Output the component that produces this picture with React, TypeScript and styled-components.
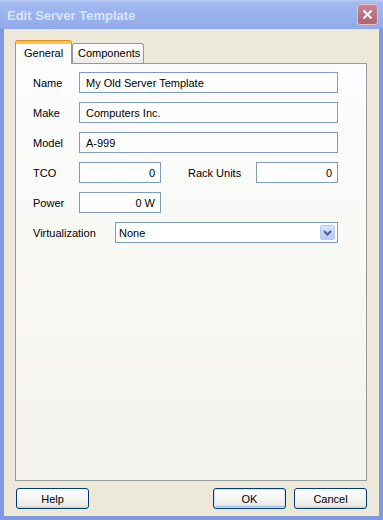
import React from 'react';
import styled, { createGlobalStyle } from 'styled-components';

const GlobalStyle = createGlobalStyle`
  html, body {
    margin: 0;
    padding: 0;
    background: #ece9d8;
  }
  body {
    font-family: "Liberation Sans", Arial, sans-serif;
    font-size: 11px;
    color: #000;
  }
`;

const Window = styled.div`
  width: 383px;
  height: 520px;
  box-sizing: border-box;
  display: flex;
  flex-direction: column;
  background: #8199e3;
`;

const TitleBar = styled.div`
  height: 29px;
  flex: 0 0 auto;
  display: flex;
  align-items: center;
  justify-content: space-between;
  padding: 0 5px 0 7px;
  box-sizing: border-box;
  background: linear-gradient(
    to bottom,
    #b9cbf4 0px,
    #a3baf0 3px,
    #9bb3ee 12px,
    #94adec 26px,
    #8ea6e8 29px
  );
`;

const Title = styled.span`
  font-family: "Liberation Sans", Arial, sans-serif;
  font-weight: bold;
  font-size: 13px;
  color: #d9e4f9;
  padding-top: 1px;
`;

const CloseButton = styled.div`
  width: 21px;
  height: 21px;
  box-sizing: border-box;
  border: 1px solid #e3c1c8;
  border-radius: 3px;
  background: linear-gradient(to bottom, #c98790, #bb6f7a 60%, #b4666f);
  display: flex;
  align-items: center;
  justify-content: center;
  margin-top: -1px;
`;

const Client = styled.div`
  flex: 1;
  margin: 0 4px 4px 4px;
  background: #ece9d8;
  padding: 12px 12px 7px 11px;
  display: flex;
  flex-direction: column;
`;

const TabStrip = styled.div`
  height: 22px;
  display: flex;
  align-items: flex-end;
  flex: 0 0 auto;
`;

const Tab = styled.div<{ $active?: boolean }>`
  box-sizing: border-box;
  height: ${(p) => (p.$active ? 23 : 20)}px;
  margin-bottom: ${(p) => (p.$active ? -1 : 0)}px;
  padding: ${(p) => (p.$active ? '3px 0 0 8px' : '3px 0 0 5px')};
  width: ${(p) => (p.$active ? 57 : 72)}px;
  position: relative;
  z-index: ${(p) => (p.$active ? 2 : 0)};
  border: 1px solid #919b9c;
  border-bottom: none;
  border-top: ${(p) => (p.$active ? '3px solid #ffc83c' : '1px solid #919b9c')};
  border-radius: 3px 3px 0 0;
  background: ${(p) =>
    p.$active
      ? '#fcfcfe'
      : 'linear-gradient(to bottom, #ffffff, #f6f5f0 60%, #ebeae4)'};
  display: flex;
  align-items: flex-start;
  white-space: nowrap;
  box-shadow: ${(p) => (p.$active ? '0 -1px 0 #e68b2c' : 'none')};
`;

const Panel = styled.div`
  flex: 1;
  border: 1px solid #919b9c;
  background: linear-gradient(to bottom, #fcfcfe 0%, #f9f9f6 40%, #f4f3ee 100%);
  padding: 8px 0 0 17px;
  display: flex;
  flex-direction: column;
  gap: 9px;
`;

const Row = styled.div`
  display: flex;
  align-items: center;
  height: 21px;
`;

const Label = styled.label<{ $width: number }>`
  width: ${(p) => p.$width}px;
  flex: 0 0 auto;
`;

const Field = styled.div<{ $width: number; $right?: boolean }>`
  width: ${(p) => p.$width}px;
  height: 21px;
  box-sizing: border-box;
  border: 1px solid #7f9db9;
  background: #fff;
  padding: 0 5px 0 6px;
  display: flex;
  align-items: center;
  justify-content: ${(p) => (p.$right ? 'flex-end' : 'flex-start')};
  flex: 0 0 auto;
`;

const Spacer = styled.div<{ $width: number }>`
  width: ${(p) => p.$width}px;
  flex: 0 0 auto;
`;

const Combo = styled.div`
  width: 223px;
  height: 21px;
  box-sizing: border-box;
  border: 1px solid #7f9db9;
  background: #fff;
  display: flex;
  align-items: center;
  justify-content: space-between;
  padding: 0 2px 0 3px;
`;

const DropButton = styled.div`
  width: 15px;
  height: 15px;
  box-sizing: border-box;
  border: 1px solid #b4c8f5;
  border-radius: 2px;
  background: linear-gradient(to bottom, #dbe6fd, #c3d5fb 50%, #b3c7f6);
  display: flex;
  align-items: center;
  justify-content: center;
`;

const ButtonRow = styled.div`
  display: flex;
  align-items: center;
  margin-top: 7px;
  height: 21px;
  padding-left: 1px;
  gap: 8px;
`;

const Button = styled.div<{ $default?: boolean }>`
  width: 73px;
  height: 21px;
  box-sizing: border-box;
  border: 1px solid #003c74;
  border-radius: 3px;
  background: linear-gradient(to bottom, #ffffff 0%, #f4f4f0 50%, #ecebe6 85%, #d6d0c5 100%);
  box-shadow: ${(p) =>
    p.$default ? 'inset 0 0 0 1px #cee7ff, inset 0 -1px 0 1px #98b8ea' : 'none'};
  display: flex;
  align-items: center;
  justify-content: center;
`;

const Grow = styled.div`
  flex: 1;
`;

const App: React.FC = () => {
  return (
    <>
      <GlobalStyle />
      <Window>
        <TitleBar>
          <Title>Edit Server Template</Title>
          <CloseButton>
            <svg width="11" height="11" viewBox="0 0 11 11">
              <path d="M1.5 1.5 L9.5 9.5 M9.5 1.5 L1.5 9.5" stroke="#fff" strokeWidth="2" />
            </svg>
          </CloseButton>
        </TitleBar>
        <Client>
          <TabStrip>
            <Tab $active>General</Tab>
            <Tab>Components</Tab>
          </TabStrip>
          <Panel>
            <Row>
              <Label $width={46}>Name</Label>
              <Field $width={259}>My Old Server Template</Field>
            </Row>
            <Row>
              <Label $width={46}>Make</Label>
              <Field $width={259}>Computers Inc.</Field>
            </Row>
            <Row>
              <Label $width={46}>Model</Label>
              <Field $width={259}>A-999</Field>
            </Row>
            <Row>
              <Label $width={46}>TCO</Label>
              <Field $width={82} $right>
                0
              </Field>
              <Spacer $width={27} />
              <Label $width={68}>Rack Units</Label>
              <Field $width={82} $right>
                0
              </Field>
            </Row>
            <Row>
              <Label $width={46}>Power</Label>
              <Field $width={82} $right>
                0 W
              </Field>
            </Row>
            <Row>
              <Label $width={82}>Virtualization</Label>
              <Combo>
                <span>None</span>
                <DropButton>
                  <svg width="9" height="6" viewBox="0 0 9 6">
                    <path d="M1 1 L4.5 4.5 L8 1" fill="none" stroke="#4d6185" strokeWidth="2" />
                  </svg>
                </DropButton>
              </Combo>
            </Row>
          </Panel>
          <ButtonRow>
            <Button>Help</Button>
            <Grow />
            <Button $default>OK</Button>
            <Button>Cancel</Button>
          </ButtonRow>
        </Client>
      </Window>
    </>
  );
};

export default App;
